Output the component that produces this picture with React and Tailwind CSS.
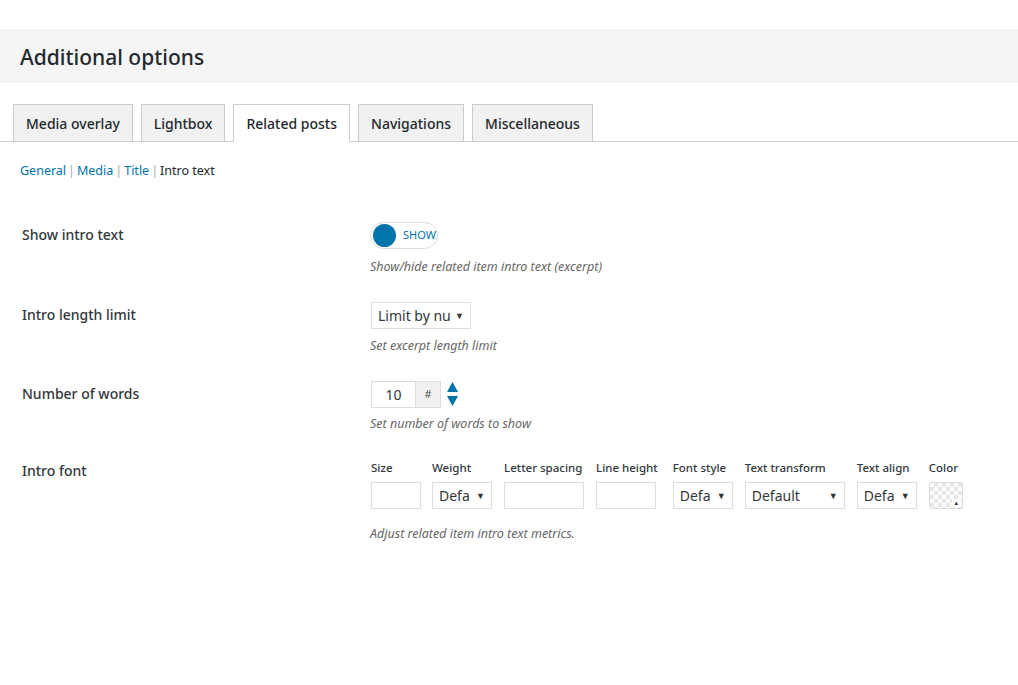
import React, { useState } from "react";

const font = { fontFamily: '"Noto Sans", "Open Sans", sans-serif' };

const tabs = ["Media overlay", "Lightbox", "Related posts", "Navigations", "Miscellaneous"];

function Caret() {
  return <span className="text-[9px] text-[#333] leading-none">▼</span>;
}

function Select({ value, className }) {
  return (
    <div className={`h-[27px] border border-[#ddd] bg-white flex items-center justify-between pl-[6px] pr-[6px] text-[14px] text-[#32373c] ${className}`}>
      <span>{value}</span>
      <Caret />
    </div>
  );
}

function Label({ children }) {
  return (
    <div className="w-[370px] shrink-0 pl-[22px] pt-[3px] text-[14px] leading-[20px] font-medium text-[#32373c]">{children}</div>
  );
}

function Desc({ children, className }) {
  return <p className={`text-[12.5px] leading-[18px] italic text-[#666] ${className}`}>{children}</p>;
}

function Field({ label, children, className = "" }) {
  return (
    <div className={`flex flex-col gap-[6px] ${className}`}>
      <span className="text-[11.5px] leading-[16px] font-medium text-[#32373c] whitespace-nowrap">{label}</span>
      {children}
    </div>
  );
}

export default function App() {
  const [active, setActive] = useState("Related posts");
  const [show, setShow] = useState(true);

  return (
    <div className="w-[1018px] h-[685px] bg-white overflow-hidden" style={font}>
      <div className="mt-[29px] h-[54px] bg-[#f5f5f5] flex items-center px-[20px] pt-[4px]">
        <h1 className="text-[21px] font-medium text-[#23282d]">Additional options</h1>
      </div>

      <div className="mt-[21px] flex gap-[8px] pl-[13px] border-b border-[#ccc]">
        {tabs.map((t) => (
          <button
            key={t}
            onClick={() => setActive(t)}
            className={`h-[38px] px-[12px] text-[14px] font-medium text-[#23282d] border border-[#ccc] -mb-px ${
              active === t ? "bg-white border-b-white" : "bg-[#f1f1f1]"
            }`}
          >
            {t}
          </button>
        ))}
      </div>

      <div className="mt-[20px] pl-[20px] text-[12.5px] text-[#555] flex gap-[2px]">
        <a className="text-[#0073aa]">General</a>
        <span className="text-[#aaa]">|</span>
        <a className="text-[#0073aa]">Media</a>
        <span className="text-[#aaa]">|</span>
        <a className="text-[#0073aa]">Title</a>
        <span className="text-[#aaa]">|</span>
        <span className="text-[#23282d]">Intro text</span>
      </div>

      <div className="mt-[41px]">
        <div className="flex h-[80px]">
          <Label>Show intro text</Label>
          <div>
            <button
              onClick={() => setShow(!show)}
              className="h-[27px] w-[68px] rounded-full border border-[#ddd] bg-white flex items-center pl-[2px] gap-[7px]"
            >
              <span className="w-[23px] h-[23px] rounded-full bg-[#0073aa]" />
              <span className="text-[11px] text-[#0073aa]">{show ? "SHOW" : "HIDE"}</span>
            </button>
            <Desc className="mt-[9px]">Show/hide related item intro text (excerpt)</Desc>
          </div>
        </div>

        <div className="flex h-[79px]">
          <Label>Intro length limit</Label>
          <div>
            <Select value="Limit by nu" className="w-[100px] ml-[1px]" />
            <Desc className="mt-[8px]">Set excerpt length limit</Desc>
          </div>
        </div>

        <div className="flex h-[79px]">
          <Label>Number of words</Label>
          <div>
            <div className="flex items-center ml-[1px]">
              <div className="h-[27px] w-[45px] border border-[#ddd] flex items-center justify-center text-[14px] text-[#32373c]">10</div>
              <div className="h-[27px] w-[25px] border border-l-0 border-[#ddd] bg-[#f1f1f1] flex items-center justify-center text-[11px] text-[#555]">#</div>
              <div className="ml-[6px] flex flex-col gap-[4px]">
                <svg width="11" height="10" viewBox="0 0 11 10"><path d="M5.5 0L11 10H0z" fill="#0073aa" /></svg>
                <svg width="11" height="10" viewBox="0 0 11 10"><path d="M0 0H11L5.5 10z" fill="#0073aa" /></svg>
              </div>
            </div>
            <Desc className="mt-[7px]">Set number of words to show</Desc>
          </div>
        </div>

        <div className="flex">
          <div className="w-[370px] shrink-0 pl-[22px] pt-[1px] text-[14px] leading-[20px] font-medium text-[#32373c]">Intro font</div>
          <div>
            <div className="flex gap-[12px] items-end ml-[1px]">
              <Field label="Size" className="-mr-[1px]"><div className="h-[27px] w-[50px] border border-[#ddd]" /></Field>
              <Field label="Weight"><Select value="Defa" className="w-[60px]" /></Field>
              <Field label="Letter spacing"><div className="h-[27px] w-[80px] border border-[#ddd]" /></Field>
              <Field label="Line height"><div className="h-[27px] w-[60px] border border-[#ddd]" /></Field>
              <Field label="Font style" className="ml-[3px]"><Select value="Defa" className="w-[60px]" /></Field>
              <Field label="Text transform"><Select value="Default" className="w-[100px]" /></Field>
              <Field label="Text align"><Select value="Defa" className="w-[60px]" /></Field>
              <Field label="Color">
                <div
                  className="relative h-[27px] w-[34px] border border-[#ddd] rounded-[2px]"
                  style={{
                    backgroundImage:
                      "linear-gradient(45deg,#e6e6e6 25%,transparent 25%,transparent 75%,#e6e6e6 75%),linear-gradient(45deg,#e6e6e6 25%,transparent 25%,transparent 75%,#e6e6e6 75%)",
                    backgroundSize: "8px 8px",
                    backgroundPosition: "0 0,4px 4px",
                  }}
                >
                  <span className="absolute right-[1px] bottom-[1px] w-[9px] h-[8px] bg-white flex items-center justify-center text-[6px] leading-none text-[#333]">▲</span>
                </div>
              </Field>
            </div>
            <Desc className="mt-[16px]">Adjust related item intro text metrics.</Desc>
          </div>
        </div>
      </div>
    </div>
  );
}
